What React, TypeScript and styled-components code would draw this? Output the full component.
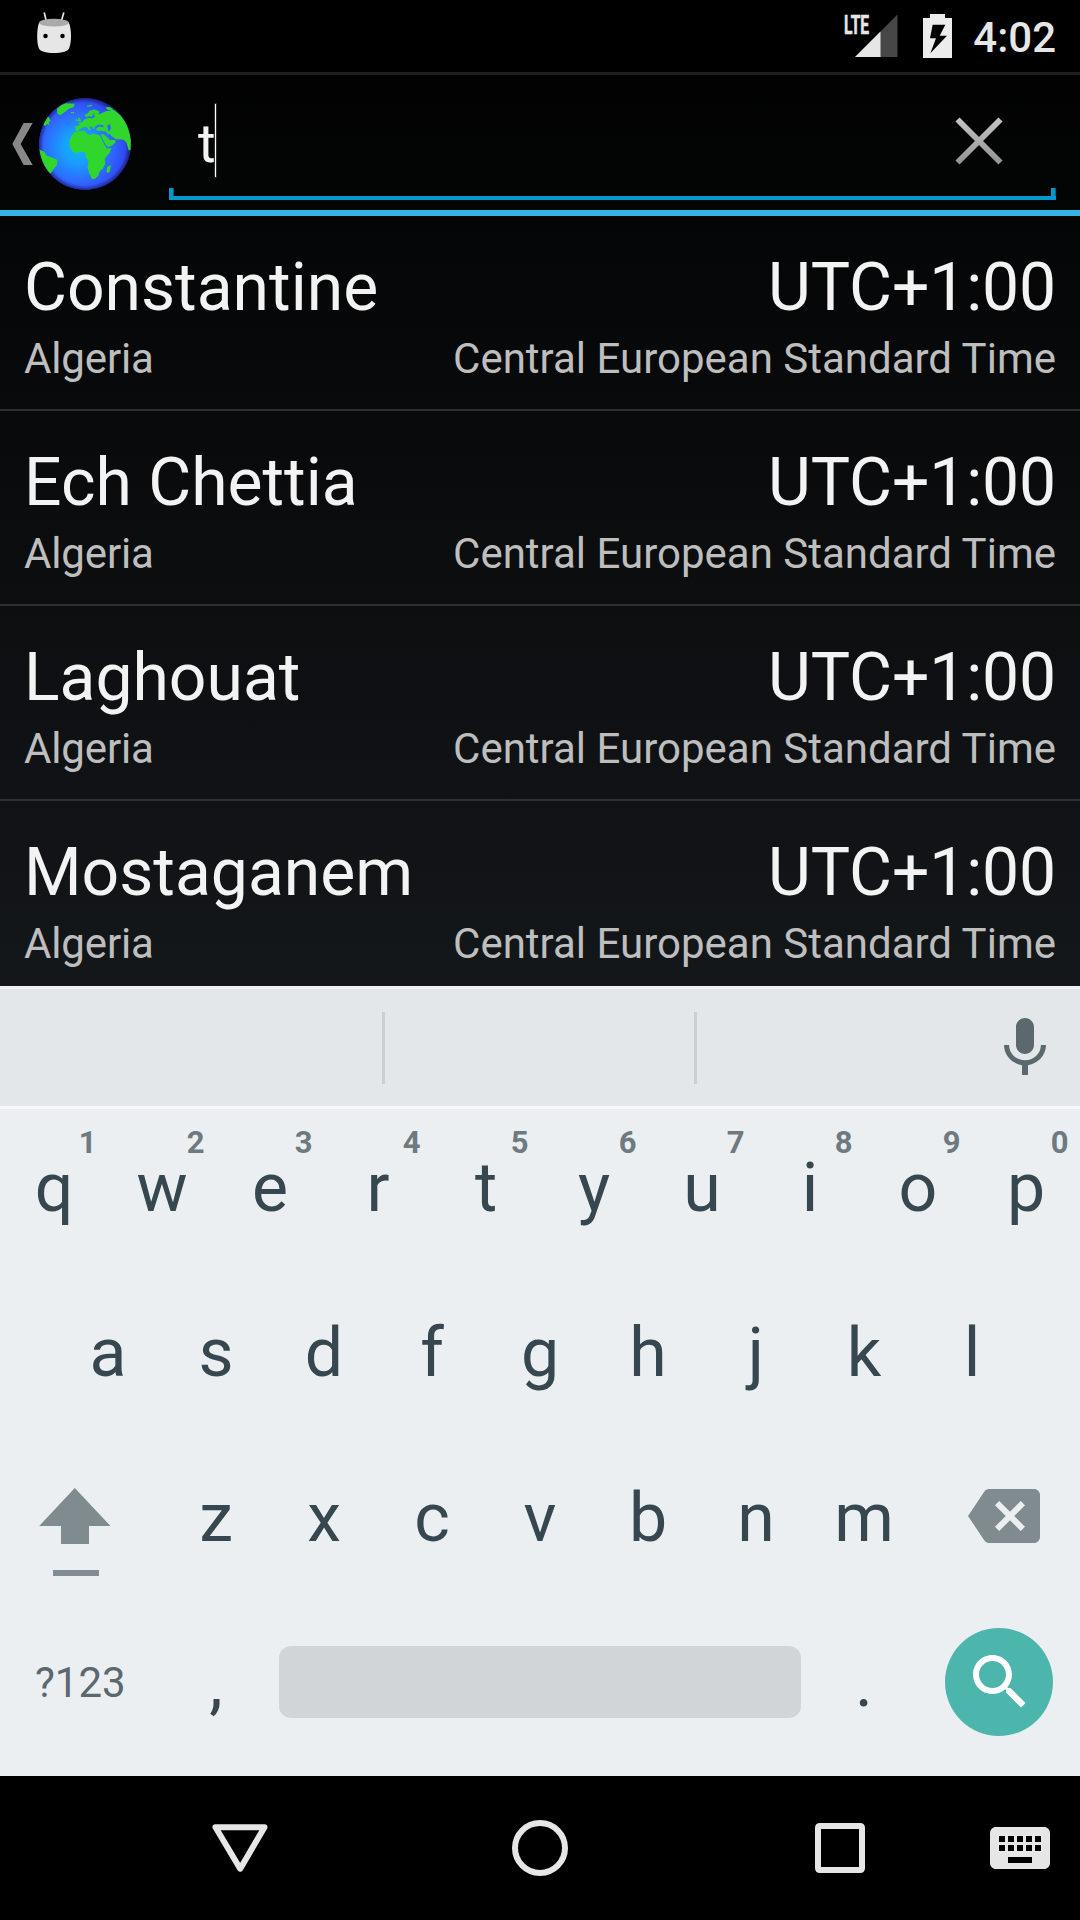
import React from 'react';
import styled, { createGlobalStyle } from 'styled-components';

const GlobalStyle = createGlobalStyle`
  body { margin: 0; background: #000; }
  * { box-sizing: border-box; }
  svg { display: block; flex: none; }
`;

const Screen = styled.div`
  width: 1080px;
  height: 1920px;
  display: flex;
  flex-direction: column;
  overflow: hidden;
  font-family: Roboto, 'Liberation Sans', sans-serif;
  background: linear-gradient(#000000, #272d33);
`;

const StatusBar = styled.header`
  height: 75px;
  flex: none;
  display: flex;
  align-items: flex-start;
  background: #000;
  border-bottom: 3px solid #1f1f1f;
  padding: 12px 24px 0 36px;
  color: #e6e6e6;
`;

const StatusIcons = styled.div`
  margin-left: auto;
  display: flex;
`;

const NetworkLabel = styled.span`
  width: 28px;
  height: 22px;
  margin: 2px -17px 0 0;
  font-size: 26px;
  line-height: 23px;
  font-weight: 700;
  -webkit-text-stroke: 0.6px #e6e6e6;
  transform: scaleX(0.6);
  transform-origin: left center;
`;

const Clock = styled.span`
  width: 83px;
  margin-left: 21px;
  font-size: 42px;
  font-weight: 500;
  line-height: 52px;
  text-align: right;
  white-space: nowrap;
`;

const ActionBar = styled.div`
  height: 141px;
  flex: none;
  display: flex;
  align-items: flex-start;
  padding: 22px 24px 0 12px;
  border-bottom: 6px solid #33b5e5;
`;

const HomeButton = styled.div`
  display: flex;
  align-items: center;
  gap: 6px;
  width: 157px;
  height: 94px;
`;

const SearchField = styled.div`
  flex: 1;
  height: 103px;
  display: flex;
  align-items: flex-start;
  justify-content: space-between;
  padding: 7px 51px 0 29px;
  background:
    linear-gradient(#0099cc, #0099cc) left bottom / 100% 4px no-repeat,
    linear-gradient(#0099cc, #0099cc) left bottom / 4.6px 12px no-repeat,
    linear-gradient(#0099cc, #0099cc) right bottom / 4.6px 12px no-repeat;
`;

const Query = styled.div`
  display: flex;
  color: #f3f3f3;
  font-size: 54px;
  line-height: 80px;
`;

const Caret = styled.i`
  width: 1px;
  height: 73px;
  margin-left: -1px;
  background: #fff;
  box-shadow: 0 0 1px 1px rgba(255, 255, 255, 0.18);
`;

const Results = styled.main`
  height: 770px;
  flex: none;
  overflow: hidden;
`;

const Row = styled.div`
  height: 195px;
  padding: 33px 24px 0;
  border-bottom: 2px solid #2d2f31;
`;

const Line = styled.div<{ $minor?: boolean }>`
  display: flex;
  justify-content: space-between;
  white-space: nowrap;
  font-size: ${p => (p.$minor ? 42 : 66)}px;
  line-height: ${p => (p.$minor ? 50 : 78)}px;
  margin-top: ${p => (p.$minor ? 7 : 0)}px;
  color: ${p => (p.$minor ? '#bebebe' : '#f3f3f3')};
`;

const Offset = styled.span`
  letter-spacing: -0.13px;
`;

const Country = styled.span`
  letter-spacing: -0.14px;
`;

const Keyboard = styled.section`
  height: 790px;
  flex: none;
  display: flex;
  flex-direction: column;
  background: #eceff2;
`;

const Suggestions = styled.div`
  height: 123px;
  flex: none;
  display: flex;
  align-items: center;
  background: #e3e7e9;
  border-top: 3px solid #f0f2f2;
  border-bottom: 3px solid #f5f7f9;
  padding: 1px 19px 0 0;
`;

const Suggestion = styled.div<{ $width: number }>`
  width: ${p => p.$width}px;
  height: 72px;
  border-right: 3px solid #cbcfd2;
`;

const MicButton = styled.div`
  margin-left: auto;
`;

const KeyRow = styled.div<{ $inset?: number; $height?: number }>`
  display: flex;
  height: ${p => p.$height ?? 165}px;
  padding: 0 ${p => p.$inset ?? 0}px;
`;

const Key = styled.div`
  position: relative;
  width: 108px;
  text-align: center;
  font-size: 68px;
  line-height: 158px;
  color: #37474f;
`;

const Hint = styled.span`
  position: absolute;
  top: 16px;
  right: 11.5px;
  font-size: 31px;
  font-weight: 700;
  line-height: 36px;
  color: #6e7a80;
`;

const WideKey = styled.div<{ $top?: number; $left?: number }>`
  width: 162px;
  padding: ${p => p.$top ?? 0}px 0 0 ${p => p.$left ?? 0}px;
`;

const SymbolsKey = styled(WideKey)`
  font-size: 42px;
  line-height: 158px;
  color: #5b686e;
`;

const SpaceBar = styled.div`
  width: 522px;
  height: 72px;
  margin: 42px 9px 0;
  border-radius: 12px;
  background: #d1d5d8;
`;

const SearchButton = styled.div`
  width: 108px;
  height: 108px;
  border-radius: 50%;
  display: flex;
  align-items: center;
  justify-content: center;
  padding-left: 1px;
  background: #4db6ac;
`;

const NavBar = styled.nav`
  height: 144px;
  flex: none;
  display: flex;
  align-items: center;
  background: #000;
  padding: 0 30px 0 210px;
`;

const NavItem = styled.div<{ $gap?: number }>`
  margin-left: ${p => p.$gap ?? 0}px;
`;

const AndroidHead = () => (
  <svg width="36" height="42" viewBox="108 36 108 126">
    <path d="M133 39l6 25M191 39l-7 25" stroke="#e6e6e6" strokeWidth="5" strokeLinecap="round" />
    <path d="M117 68C110 88 110 126 116 143C118 154 139 159 162 159C185 159 206 154 208 143C215 126 215 88 207 68Z" fill="#e6e6e6" />
    <ellipse cx="162" cy="68" rx="45" ry="11.5" fill="#aaa" />
    <circle cx="136.500" cy="108" r="6.700" fill="#000" />
    <circle cx="187.500" cy="108" r="6.700" fill="#000" />
  </svg>
);

const Signal = () => (
  <svg width="44" height="46" viewBox="0 0 44 46">
    <path d="M0 45L42.500 2.500V45Z" fill="#474747" />
    <path d="M0 45L25.500 19.500V45Z" fill="#e6e6e6" />
  </svg>
);

const Battery = () => (
  <svg width="29" height="46" viewBox="369 36 87 138" style={{ marginLeft: 24 }}>
    <path d="M390 42H435V54H456V174H369V54H390Z" fill="#ececec" />
    <path d="M398 74H436L419 107H441L391 160L408 115H390Z" fill="#000" />
  </svg>
);

const BackChevron = () => (
  <svg width="21" height="42" viewBox="39 369 61 126">
    <path d="M73 369H100L64 432L100 495H73L39 432Z" fill="#888" />
  </svg>
);

const Globe = () => (
  <svg width="92" height="92" viewBox="117 293 277 277">
    <defs>
      <radialGradient id="sea" cx="0.42" cy="0.54" r="0.58">
        <stop offset="0" stopColor="#08b8ff" />
        <stop offset="0.3" stopColor="#1a9cff" />
        <stop offset="0.68" stopColor="#2f64ff" />
        <stop offset="0.88" stopColor="#2f4cf0" />
        <stop offset="1" stopColor="#2a2fae" />
      </radialGradient>
      <radialGradient id="rim">
        <stop offset="0.9" stopColor="#1c1c80" stopOpacity="0" />
        <stop offset="1" stopColor="#1c1c80" stopOpacity="0.75" />
      </radialGradient>
      <clipPath id="disc"><circle cx="255.500" cy="431.500" r="138" /></clipPath>
    </defs>
    <circle cx="255.500" cy="431.500" r="138" fill="url(#sea)" />
    <circle cx="255.500" cy="431.500" r="138" fill="url(#rim)" />
    <g clipPath="url(#disc)" fill="#30d62c">
      <path d="M221 398L237 393L254 391L261 401L273 405L278 400L300 405L305 416L314 434L321 445L335 444L330 458L315 475L316 492L309 506L301 512L295 527L285 537L276 537L268 519L263 502L266 485L258 470L256 457L244 454L229 459L217 453L209 439L209 421L214 409Z" />
      <path d="M227 391L226 377L239 377L236 368L246 366L253 359L262 354L270 353L276 355L287 349L281 346L286 338L279 343L275 351L269 347L259 350L254 344L264 339L270 331L285 328L299 334L296 343L306 338L318 333L333 331L326 323L345 331L362 345L380 369L394 400L394 450L387 450L381 429L374 420L363 417L351 418L341 412L333 405L328 394L334 384L330 371L323 375L324 388L332 401L327 403L317 394L305 392L291 391L289 384L300 379L312 381L310 375L298 373L287 377L282 387L277 380L268 377L273 390L268 390L260 380L250 381L239 387L236 393Z" />
      <path d="M303 403L312 402L323 412L331 420L346 419L348 426L338 435L325 441L317 432L309 417Z" />
      <path d="M172 340L171 326L184 314L198 309L224 310L221 321L207 325L195 335L181 345Z" />
      <path d="M133 362L144 348L149 355L152 361L146 367L149 375L142 371L137 377L131 374Z" />
      <path d="M117 448L131 453L140 466L156 472L173 480L171 495L162 506L152 520L137 512L117 480Z" />
      <path d="M333 495L331 513L326 519L320 515L322 501Z" />
      <path d="M212 335L224 335L221 339L213 339ZM261 316L277 313L275 318L262 319ZM317 321L329 320L342 327L325 330Z" />
      <path d="M234 351L240 354L244 362L232 364L236 358ZM229 356L233 357L231 362L227 362Z" />
    </g>
  </svg>
);

const ClearIcon = () => (
  <svg width="52" height="52" viewBox="0 0 52 52" style={{ marginTop: 10.5 }}>
    <defs>
      <linearGradient id="steel" x1="0" y1="2" x2="0" y2="50" gradientUnits="userSpaceOnUse">
        <stop stopColor="#c6c6c6" />
        <stop offset="1" stopColor="#929292" />
      </linearGradient>
    </defs>
    <path d="M4.500 4.500L47.500 47.500M47.500 4.500L4.500 47.500" stroke="url(#steel)" strokeWidth="5.800" />
  </svg>
);

const MaterialIcon = ({ d, color, width = 72, height = 72, box = '0 0 24 24' }: {
  d: string; color: string; width?: number; height?: number; box?: string;
}) => (
  <svg width={width} height={height} viewBox={box}><path d={d} fill={color} /></svg>
);

const MIC = 'M12 14c1.66 0 2.99-1.34 2.99-3L15 5c0-1.66-1.34-3-3-3S9 3.34 9 5v6c0 1.66 1.34 3 3 3zm5.3-3c0 3-2.54 5.1-5.3 5.1S6.7 14 6.700 11H5c0 3.410 2.720 6.230 6 6.720V21h2v-3.280c3.280-.48 6-3.300 6-6.720h-1.700z';
const SEARCH = 'M15.500 14h-.79l-.28-.27C15.410 12.590 16 11.110 16 9.500 16 5.910 13.090 3 9.500 3S3 5.910 3 9.500 5.910 16 9.500 16c1.610 0 3.090-.59 4.230-1.570l.27.28v.79l5 4.990L20.490 19l-4.990-5zm-6 0C7.010 14 5 11.990 5 9.500S7.010 5 9.500 5 14 7.010 14 9.500 11.990 14 9.500 14z';
const BACKSPACE = 'M22 3H7c-.69 0-1.230.35-1.590.88L0 12l5.410 8.110c.36.53.9.89 1.590.89h15c1.100 0 2-.9 2-2V5c0-1.100-.9-2-2-2zm-3 12.590L17.590 17 14 13.410 10.410 17 9 15.590 12.590 12 9 8.410 10.410 7 14 10.590 17.590 7 19 8.410 15.410 12 19 15.590z';
const KEYBOARD = 'M20 5H4c-1.100 0-1.990.9-1.990 2L2 17c0 1.100.9 2 2 2h16c1.100 0 2-.9 2-2V7c0-1.100-.9-2-2-2zm-9 3h2v2h-2V8zm0 3h2v2h-2v-2zM8 8h2v2H8V8zm0 3h2v2H8v-2zm-1 2H5v-2h2v2zm0-3H5V8h2v2zm9 7H8v-2h8v2zm0-4h-2v-2h2v2zm0-3h-2V8h2v2zm3 3h-2v-2h2v2zm0-3h-2V8h2v2z';

const ShiftIcon = () => (
  <svg width="72" height="88" viewBox="0 0 72 88">
    <path d="M35.800 0L71.500 38H50V56H22V38H0.200Z" fill="#808b8f" />
    <path d="M14 82H60V88H14Z" fill="#808b92" />
  </svg>
);

const cities = ['Constantine', 'Ech Chettia', 'Laghouat', 'Mostaganem'];

export default function App() {
  return (
    <>
      <GlobalStyle />
      <Screen>
        <StatusBar>
          <AndroidHead />
          <StatusIcons>
            <NetworkLabel>LTE</NetworkLabel>
            <Signal />
            <Battery />
            <Clock>4:02</Clock>
          </StatusIcons>
        </StatusBar>
        <ActionBar>
          <HomeButton>
            <BackChevron />
            <Globe />
          </HomeButton>
          <SearchField>
            <Query>t<Caret /></Query>
            <ClearIcon />
          </SearchField>
        </ActionBar>
        <Results>
          {cities.map(city => (
            <Row key={city}>
              <Line><span>{city}</span><Offset>UTC+1:00</Offset></Line>
              <Line $minor><Country>Algeria</Country><span>Central European Standard Time</span></Line>
            </Row>
          ))}
        </Results>
        <Keyboard>
          <Suggestions>
            <Suggestion $width={385} />
            <Suggestion $width={312} />
            <MicButton><MaterialIcon d={MIC} color="#5b686e" /></MicButton>
          </Suggestions>
          <KeyRow>
            {[...'qwertyuiop'].map((letter, i) => (
              <Key key={letter}>{letter}<Hint>{(i + 1) % 10}</Hint></Key>
            ))}
          </KeyRow>
          <KeyRow $inset={54}>
            {[...'asdfghjkl'].map(letter => <Key key={letter}>{letter}</Key>)}
          </KeyRow>
          <KeyRow>
            <WideKey $top={49} $left={39}><ShiftIcon /></WideKey>
            {[...'zxcvbnm'].map(letter => <Key key={letter}>{letter}</Key>)}
            <WideKey $top={50} $left={50}>
              <MaterialIcon d={BACKSPACE} color="#808b8f" height={54} box="0 3 24 18" />
            </WideKey>
          </KeyRow>
          <KeyRow $height={172}>
            <SymbolsKey $left={35}>?123</SymbolsKey>
            <Key>,</Key>
            <SpaceBar />
            <Key>.</Key>
            <WideKey $top={24} $left={27}>
              <SearchButton><MaterialIcon d={SEARCH} color="#fff" /></SearchButton>
            </WideKey>
          </KeyRow>
        </Keyboard>
        <NavBar>
          <NavItem>
            <svg width="60" height="60" viewBox="0 0 60 60">
              <path d="M5.500 9H54.500L30.200 50.500Z" transform="translate(0 .2)" fill="none" stroke="#e6e6e6" strokeWidth="6" strokeLinejoin="round" />
            </svg>
          </NavItem>
          <NavItem $gap={240}>
            <svg width="60" height="60" viewBox="0 0 60 60">
              <circle cx="30" cy="30" r="25" fill="none" stroke="#e6e6e6" strokeWidth="6" />
            </svg>
          </NavItem>
          <NavItem $gap={240}>
            <svg width="60" height="60" viewBox="0 0 60 60">
              <path d="M10 5H50Q55 5 55 10V50Q55 55 50 55H10Q5 55 5 50V10Q5 5 10 5ZM11 11V49H49V11Z" fill="#e6e6e6" fillRule="evenodd" />
            </svg>
          </NavItem>
          <NavItem $gap={120}>
            <MaterialIcon d={KEYBOARD} color="#e6e6e6" width={60} height={42} box="2 5 20 14" />
          </NavItem>
        </NavBar>
      </Screen>
    </>
  );
}
